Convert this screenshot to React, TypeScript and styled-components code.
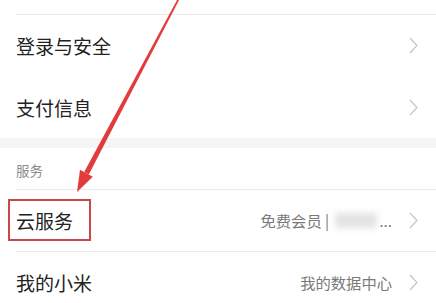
import styled, { createGlobalStyle } from "styled-components"

//#region ----- GLOBAL -----
const GlobalStyle = createGlobalStyle`
  * { box-sizing: border-box; }
  html, body {
    margin: 0;
    padding: 0;
    background: #ffffff;
    font-family: "Noto Sans CJK SC", "Noto Sans", sans-serif;
  }
  #root { width: 436px; height: 303px; overflow: hidden; }
`
//#endregion

const Chevron = () => (
  <ChevronSvg width="9" height="17" viewBox="0 0 9 17">
    <polyline points="1,1 8,8.5 1,16" fill="none" stroke="#c2c2c2" strokeWidth="1.1" />
  </ChevronSvg>
)

// annotation arrow drawn over the list
const Arrow = () => (
  <ArrowSvg width="436" height="303" viewBox="0 0 436 303">
    <polygon
      points="177.6,-1 179.6,-1 88.8,174.6 84.2,172.1"
      fill="#e23b3b"
    />
    <polygon points="92.8,176.8 80.0,169.8 77,192" fill="#e23b3b" />
  </ArrowSvg>
)

type Item = { label: string; value?: string; blurred?: boolean; marked?: boolean }

const account: Item[] = [{ label: "登录与安全" }, { label: "支付信息" }]
const services: Item[] = [
  { label: "云服务", value: "免费会员 |", blurred: true, marked: true },
  { label: "我的小米", value: "我的数据中心" },
]

export default function App() {
  const renderRow = (item: Item, divider: boolean) => (
    <Row key={item.label} $divider={divider}>
      <Label $marked={item.marked}>{item.label}</Label>
      {item.value && (
        <Value>
          {item.value}
          {item.blurred && (
            <>
              <Blur />
              <span>...</span>
            </>
          )}
        </Value>
      )}
      <Chevron />
    </Row>
  )

  return (
    <>
      <GlobalStyle />
      <Page>
        <Group $top>
          {account.map((item, i) => renderRow(item, i === 0))}
        </Group>
        <Band />
        <SectionHeader>服务</SectionHeader>
        <Group>{services.map((item) => renderRow(item, true))}</Group>
        <Arrow />
      </Page>
    </>
  )
}

//#region ----- STYLED COMPONENTS -----
const Page = styled.div`
  position: relative;
  width: 436px;
  height: 303px;
  overflow: hidden;
  background: #ffffff;
`

const Group = styled.div<{ $top?: boolean }>`
  padding-top: ${({ $top }) => ($top ? "14px" : "0")};
`

const Row = styled.div<{ $divider: boolean }>`
  display: flex;
  align-items: center;
  height: 62px;
  margin-left: 16px;
  padding-right: 18px;
  border-top: 1px solid ${({ $divider }) => ($divider ? "#ebebeb" : "transparent")};
`

const Label = styled.span<{ $marked?: boolean }>`
  position: relative;
  flex: 1;
  font-size: 19px;
  color: #222222;
  line-height: 1;

  &::after {
    content: "";
    display: ${({ $marked }) => ($marked ? "block" : "none")};
    position: absolute;
    left: -8px;
    top: -12px;
    width: 79px;
    height: 38px;
    border: 2px solid #cc474c;
  }
`

const Value = styled.span`
  display: flex;
  align-items: center;
  margin-right: 17px;
  font-size: 15.3px;
  color: #7a7a7a;
  line-height: 1;
`

const Blur = styled.span`
  display: inline-block;
  width: 42px;
  height: 15px;
  margin: 0 2px 0 6px;
  background: #e4e4e4;
  filter: blur(3px);
`

const ChevronSvg = styled.svg`
  display: block;
  flex-shrink: 0;
`

const Band = styled.div`
  height: 10px;
  background: #f5f5f5;
`

const SectionHeader = styled.div`
  display: flex;
  align-items: center;
  height: 41px;
  padding: 3px 0 0 16px;
  font-size: 13.5px;
  color: #8a8a8a;
`

const ArrowSvg = styled.svg`
  position: absolute;
  left: 0;
  top: 0;
  pointer-events: none;
`
//#endregion
